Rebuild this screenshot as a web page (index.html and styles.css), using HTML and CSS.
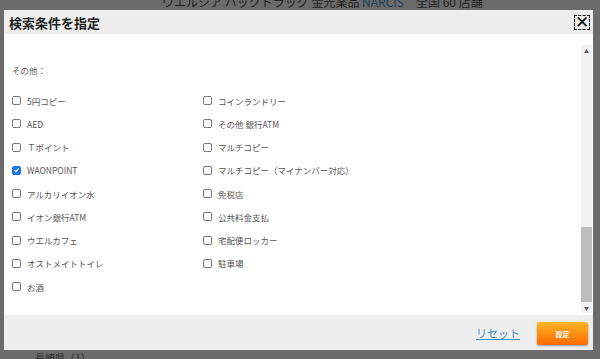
FILE: index.html
```html
<!DOCTYPE html>
<html lang="ja">
<head>
    <meta charset="UTF-8">
    <meta name="viewport" content="width=device-width, initial-scale=1.0">
    <title>検索条件を指定</title>
    <link rel="stylesheet" href="styles.css">
</head>
<body>

<div class="page">
    <div class="page-head">ウエルシア ハックドラッグ 金光薬品 <span class="brand">NARCIS</span>　全国 60 店舗</div>
    <div class="page-foot">長崎県（1）</div>
</div>

<div class="modal">
    <div class="modal-header">
        <h2>検索条件を指定</h2>
        <button class="close-btn">✕</button>
    </div>
    <div class="modal-body">
        <div class="modal-content">
            <p class="group-label">その他：</p>
            <div class="check-grid">
                <label class="check"><span class="box"></span>5円コピー</label>
                <label class="check"><span class="box"></span>コインランドリー</label>
                <label class="check"><span class="box"></span>AED</label>
                <label class="check"><span class="box"></span>その他 銀行ATM</label>
                <label class="check"><span class="box"></span>Ｔポイント</label>
                <label class="check"><span class="box"></span>マルチコピー</label>
                <label class="check"><span class="box checked"><svg viewBox="0 0 10 10" width="8" height="8"><path d="M2 5.2 L4.2 7.3 L8.2 2.6" fill="none" stroke="#fff" stroke-width="1.6"/></svg></span>WAONPOINT</label>
                <label class="check"><span class="box"></span>マルチコピー（マイナンバー対応）</label>
                <label class="check"><span class="box"></span>アルカリイオン水</label>
                <label class="check"><span class="box"></span>免税店</label>
                <label class="check"><span class="box"></span>イオン銀行ATM</label>
                <label class="check"><span class="box"></span>公共料金支払</label>
                <label class="check"><span class="box"></span>ウエルカフェ</label>
                <label class="check"><span class="box"></span>宅配便ロッカー</label>
                <label class="check"><span class="box"></span>オストメイトトイレ</label>
                <label class="check"><span class="box"></span>駐車場</label>
                <label class="check"><span class="box"></span>お酒</label>
            </div>
        </div>
        <div class="scrollbar">
            <span class="arrow">▲</span>
            <div class="track"><div class="thumb"></div></div>
            <span class="arrow">▼</span>
        </div>
    </div>
    <div class="modal-footer">
        <a class="reset-link" href="#">リセット</a>
        <button class="submit-btn">設定</button>
    </div>
</div>

</body>
</html>
```

FILE: styles.css
```css
body {
    margin: 0;
    background-color: #6b6b6b;
    font-family: "Noto Sans CJK JP", "Noto Sans", sans-serif;
    overflow: hidden;
}
.page {
    height: 359px;
    display: flex;
    flex-direction: column;
    justify-content: space-between;
}
.page-head {
    padding-left: 162px;
    margin-top: -5px;
    font-size: 12px;
    line-height: 14px;
    color: #222;
}
.brand {
    color: #1c3e5c;
}
.page-foot {
    padding-left: 35px;
    margin-bottom: -6px;
    font-size: 10px;
    line-height: 14px;
    color: #2a2a2a;
}
.modal {
    position: fixed;
    left: 4px;
    top: 10px;
    width: 589px;
    height: 340px;
    background-color: white;
    display: flex;
    flex-direction: column;
}
.modal-header {
    height: 24px;
    background-color: #eeeeee;
    display: flex;
    align-items: center;
    justify-content: space-between;
    padding: 0 3px 0 5px;
}
.modal-header h2 {
    margin: 0;
    font-size: 13px;
    font-weight: bold;
    color: #222;
}
.close-btn {
    width: 16px;
    height: 15px;
    padding: 0;
    border: 1px dashed #222;
    background: transparent;
    font-size: 17px;
    line-height: 12px;
    color: #111;
    font-family: "DejaVu Sans", sans-serif;
    display: flex;
    align-items: center;
    justify-content: center;
    overflow: hidden;
}
.modal-body {
    height: 281px;
    display: flex;
}
.modal-content {
    flex: 1;
    padding-left: 8px;
}
.group-label {
    margin: 30px 0 0;
    font-size: 8.5px;
    line-height: 12px;
    color: #555;
}
.check-grid {
    display: grid;
    grid-template-columns: 191px 1fr;
    grid-auto-rows: 23.25px;
    margin-top: 13px;
}
.check {
    display: flex;
    align-items: center;
    font-size: 8.5px;
    color: #555;
}
.box {
    width: 7px;
    height: 7px;
    border: 1px solid #777;
    border-radius: 2px;
    margin-right: 6px;
    display: flex;
    align-items: center;
    justify-content: center;
}
.box.checked {
    background-color: #1a73e8;
    border-color: #1a73e8;
}
.scrollbar {
    width: 11px;
    margin: 11px 1px 2px 0;
    background-color: #f1f1f1;
    display: flex;
    flex-direction: column;
    align-items: center;
}
.arrow {
    font-size: 5px;
    line-height: 11px;
    color: #555;
}
.track {
    flex: 1;
    width: 100%;
    display: flex;
    flex-direction: column;
    justify-content: flex-end;
}
.thumb {
    height: 75px;
    background-color: #bdbdbd;
}
.modal-footer {
    flex: 1;
    background-color: #eeeeee;
    display: flex;
    align-items: center;
    justify-content: flex-end;
    padding-right: 5px;
    gap: 17px;
}
.reset-link {
    font-size: 11px;
    color: #3a8bc0;
    text-decoration: underline;
}
.submit-btn {
    width: 51px;
    height: 23px;
    border: none;
    border-radius: 2px;
    background: linear-gradient(#ffb626, #ff6a00);
    box-shadow: 0 1px 2px rgba(0, 0, 0, 0.35);
    color: white;
    font-size: 7px;
    font-weight: bold;
    font-family: "Noto Sans CJK JP", sans-serif;
    margin-top: 2px;
}
```
